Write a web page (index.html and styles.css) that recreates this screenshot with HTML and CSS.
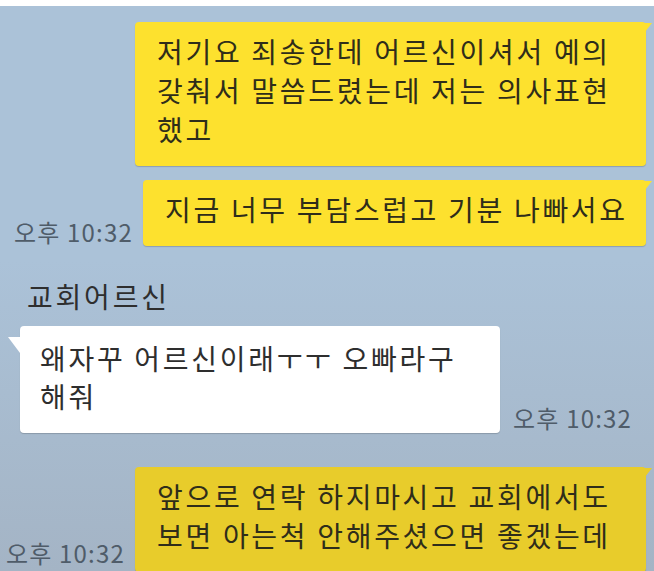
FILE: index.html
```html
<!DOCTYPE html>
<html>
<head>
	<title>채팅</title>
	<meta charset="UTF-8">

	<link rel="stylesheet" href="styles.css">
</head>
<body>

    <div class="topline"></div>

    <div class="chat">

        <div class="row me">
            <div class="bubble yellow b1">
                <span class="line">저기요 죄송한데 어르신이셔서 예의</span>
                <span class="line">갖춰서 말씀드렸는데 저는 의사표현</span>
                <span class="line">했고</span>
            </div>
        </div>

        <div class="row me second">
            <span class="time">오후 10:32</span>
            <div class="bubble yellow b2">
                <span class="line">지금 너무 부담스럽고 기분 나빠서요</span>
            </div>
        </div>

        <div class="name">교회어르신</div>

        <div class="row other">
            <div class="bubble white b3">
                <span class="line">왜자꾸 어르신이래ㅜㅜ 오빠라구</span>
                <span class="line">해줘</span>
            </div>
            <span class="time">오후 10:32</span>
        </div>

        <div class="row me next">
            <span class="time last">오후 10:32</span>
            <div class="bubble yellow dark b4">
                <span class="line">앞으로 연락 하지마시고 교회에서도</span>
                <span class="line">보면 아는척 안해주셨으면 좋겠는데</span>
            </div>
        </div>

    </div>

</body>
</html>
```

FILE: styles.css
```css
		*{
			font-family: "Malgun Gothic", "Noto Sans CJK KR", "Noto Sans", sans-serif;
			box-sizing: border-box;
		}
		body{
			margin: 0;
			width: 654px;
			height: 571px;
			overflow: hidden;
			background: white;
		}
		.topline{
			height: 6px;
			background: white;
		}
		.chat{
			height: 565px;
			padding-top: 16px;
			background: linear-gradient(#abc2d8 0%, #abc2d8 45%, #a4b4c5 100%);
			overflow: hidden;
		}
		.row{
			display: flex;
			align-items: flex-end;
		}
		.me{
			justify-content: flex-end;
			padding-right: 8px;
			gap: 10px;
		}
		.second{
			margin-top: 14px;
		}
		.next{
			margin-top: 34px;
		}
		.other{
			padding-left: 20px;
			gap: 13px;
		}
        .bubble {
            position: relative;
            font-size: 28px;
            letter-spacing: 2.7px;
            color: #2f2d1a;
            border-radius: 4px;
            box-shadow: 0 1px 1px rgba(0, 0, 0, 0.18);
            white-space: nowrap;
        }
        .line {
            display: block;
            height: 39px;
            line-height: 39px;
        }
        .white .line {
            height: 38px;
            line-height: 38px;
        }
        .yellow {
            background-color: #fde12e;
            padding: 10px 10px 17px 22px;
        }
        .yellow::after {
            content: "";
            position: absolute;
            top: 1px;
            right: -6px;
            border-top: 9px solid #fde12e;
            border-right: 7px solid transparent;
        }
        .dark {
            background-color: #e8cc2b;
        }
        .dark::after {
            border-top-color: #e8cc2b;
        }
        .white {
            background-color: white;
            color: #2e2e2e;
            padding: 13px 12px 18px 20px;
        }
        .white::after {
            content: "";
            position: absolute;
            top: 11px;
            left: -12px;
            border-top: 16px solid white;
            border-left: 12px solid transparent;
        }
		.b1{
			width: 511px;
		}
		.b2{
			width: 503px;
		}
		.b3{
			width: 480px;
		}
		.b4{
			width: 511px;
		}
		.time{
			font-size: 24px;
			letter-spacing: 1.2px;
			line-height: 26px;
			color: #4f5c69;
			margin-bottom: 1px;
			white-space: nowrap;
		}
		.other .time{
			margin-bottom: 2px;
		}
		.time.last{
			margin-bottom: 6px;
		}
		.name{
			margin-top: 35px;
			padding-left: 27px;
			font-size: 28px;
			letter-spacing: 2.8px;
			line-height: 30px;
			color: #2e2e2e;
			margin-bottom: 15px;
		}
```
